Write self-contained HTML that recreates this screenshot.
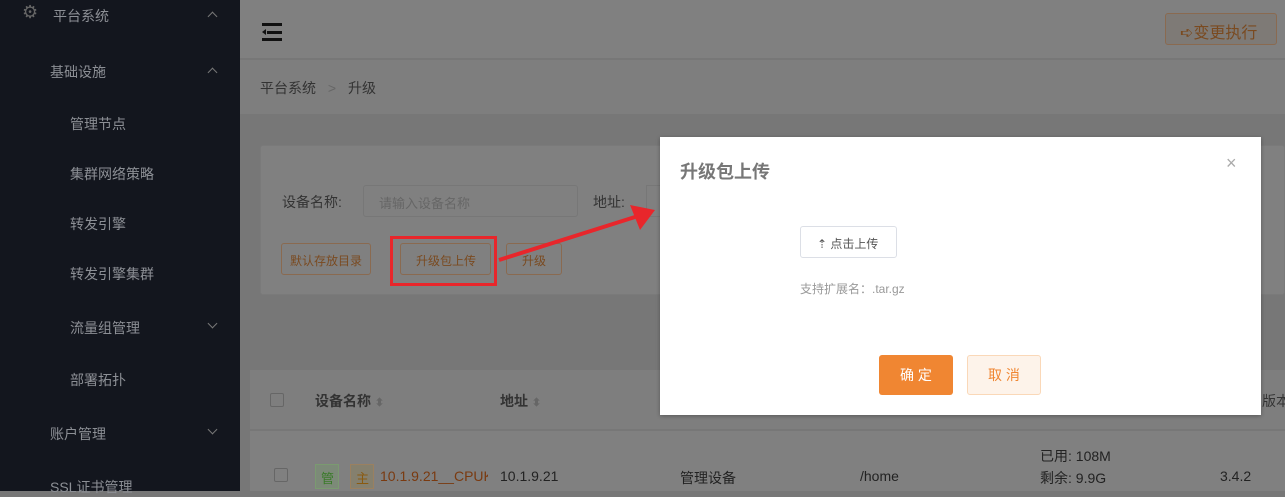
<!DOCTYPE html>
<html><head><meta charset="utf-8"><style>
*{margin:0;padding:0;box-sizing:border-box}
body{width:1285px;height:491px;overflow:hidden;position:relative;font-family:"Liberation Sans","Noto Sans CJK SC",sans-serif;background:#777}
.sb{position:absolute;left:0;top:0;width:240px;height:491px;background:#13161e;color:#8c8f95;font-size:14px}
.sb div{position:absolute;white-space:nowrap}
.car{position:absolute;width:7px;height:7px;border-left:1px solid #777;border-top:1px solid #777}
.up{transform:rotate(45deg)}.dn{transform:rotate(225deg)}
.a{position:absolute;white-space:nowrap}
</style></head><body>
<div class="sb">
<div style="left:22px;top:2px;font-size:18px;color:#666">⚙</div>
<div style="left:53px;top:6px">平台系统</div><div class="car up" style="left:209px;top:13px"></div>
<div style="left:50px;top:62px">基础设施</div><div class="car up" style="left:209px;top:69px"></div>
<div style="left:70px;top:114px">管理节点</div>
<div style="left:70px;top:164px">集群网络策略</div>
<div style="left:70px;top:214px">转发引擎</div>
<div style="left:70px;top:264px">转发引擎集群</div>
<div style="left:70px;top:318px">流量组管理</div><div class="car dn" style="left:209px;top:320px"></div>
<div style="left:70px;top:370px">部署拓扑</div>
<div style="left:50px;top:424px">账户管理</div><div class="car dn" style="left:209px;top:426px"></div>
<div style="left:50px;top:477px">SSL证书管理</div>
</div>
<div class="a" style="left:240px;top:0;width:1045px;height:58px;background:#808080"></div>
<div class="a" style="left:262px;top:23px;width:20px;height:3px;background:#111"></div>
<div class="a" style="left:267px;top:31px;width:15px;height:3px;background:#111"></div>
<div class="a" style="left:262px;top:38px;width:20px;height:3px;background:#111"></div>
<div class="a" style="left:262px;top:29px;width:0;height:0;border-top:3px solid transparent;border-bottom:3px solid transparent;border-right:4px solid #111"></div>
<div class="a" style="left:1165px;top:13px;width:112px;height:32px;border:1px solid #8a6a50;border-radius:3px;background:#7e7a76;color:#7a4a20;font-size:16px;padding:5px 0 0 14px">➪变更执行</div>
<div class="a" style="left:240px;top:60px;width:1045px;height:54px;background:#7e7e7e;color:#333;font-size:14px;padding:18px 0 0 20px">平台系统 <span style="color:#666;margin:0 8px">&gt;</span> 升级</div>
<div class="a" style="left:260px;top:145px;width:1025px;height:150px;background:#808080;border:1px solid #7a7a7a;border-radius:3px"></div>
<div class="a" style="left:282px;top:192px;font-size:14px;color:#333">设备名称:</div>
<div class="a" style="left:363px;top:185px;width:215px;height:32px;border:1px solid #777;border-radius:3px;color:#666;font-size:13px;padding:7px 0 0 15px">请输入设备名称</div>
<div class="a" style="left:593px;top:192px;font-size:14px;color:#333">地址:</div>
<div class="a" style="left:646px;top:185px;width:20px;height:32px;border:1px solid #777"></div>
<div class="a" style="left:281px;top:243px;width:90px;height:32px;border:1px solid #8a6a50;border-radius:3px;color:#7a4a20;font-size:12px;padding:8px 0 0 8px">默认存放目录</div>
<div class="a" style="left:400px;top:243px;width:91px;height:32px;border:1px solid #8a6a50;border-radius:3px;color:#7a4a20;font-size:12px;padding:8px 0 0 15px">升级包上传</div>
<div class="a" style="left:390px;top:236px;width:107px;height:50px;border:3px solid #e8262b"></div>
<div class="a" style="left:506px;top:243px;width:56px;height:32px;border:1px solid #8a6a50;border-radius:3px;color:#7a4a20;font-size:12px;padding:8px 0 0 15px">升级</div>
<svg class="a" style="left:495px;top:205px" width="165" height="60"><line x1="4" y1="55" x2="140" y2="12" stroke="#e8262b" stroke-width="4"/><polygon points="160,5 135,0 145,25" fill="#e8262b"/></svg>
<div class="a" style="left:250px;top:370px;width:1035px;height:60px;background:#7e7e7e;border-bottom:1px solid #777"></div>
<div class="a" style="left:270px;top:393px;width:14px;height:14px;border:1px solid #666;border-radius:2px"></div>
<div class="a" style="left:315px;top:391px;font-size:14px;color:#333;font-weight:bold">设备名称 <span style="color:#666;font-size:11px">⬍</span></div>
<div class="a" style="left:500px;top:391px;font-size:14px;color:#333;font-weight:bold">地址 <span style="color:#666;font-size:11px">⬍</span></div>
<div class="a" style="left:1262px;top:391px;font-size:14px;color:#333">版本</div>
<div class="a" style="left:250px;top:431px;width:1035px;height:60px;background:#808080"></div>
<div class="a" style="left:274px;top:468px;width:14px;height:14px;border:1px solid #666;border-radius:2px"></div>
<div class="a" style="left:315px;top:464px;width:24px;height:25px;border:1px solid #7a9a70;background:#7c8a78;color:#3a7a2a;font-size:13px;padding:3px 0 0 5px">管</div>
<div class="a" style="left:350px;top:464px;width:24px;height:25px;border:1px solid #9a8060;background:#85806e;color:#8a5a10;font-size:13px;padding:3px 0 0 5px">主</div>
<div class="a" style="left:380px;top:468px;width:108px;overflow:hidden;font-size:14px;color:#7a3a10">10.1.9.21__CPUK</div>
<div class="a" style="left:500px;top:468px;font-size:14px;color:#222">10.1.9.21</div>
<div class="a" style="left:680px;top:468px;font-size:14px;color:#222">管理设备</div>
<div class="a" style="left:860px;top:468px;font-size:14px;color:#222">/home</div>
<div class="a" style="left:1040px;top:446px;font-size:14px;color:#222">已用: 108M</div>
<div class="a" style="left:1040px;top:468px;font-size:14px;color:#222">剩余: 9.9G</div>
<div class="a" style="left:1220px;top:468px;font-size:14px;color:#222">3.4.2</div>
<div class="a" style="left:660px;top:137px;width:601px;height:278px;background:#fff;box-shadow:0 1px 4px rgba(0,0,0,.3)">
<div class="a" style="left:20px;top:21px;font-size:18px;font-weight:bold;color:#777">升级包上传</div>
<div class="a" style="left:566px;top:16px;font-size:18px;color:#aaa">×</div>
<div class="a" style="left:140px;top:89px;width:97px;height:32px;border:1px solid #dcdfe6;border-radius:3px;font-size:12px;color:#555;padding:8px 0 0 16px">⇡ 点击上传</div>
<div class="a" style="left:140px;top:143px;font-size:12px;color:#999">支持扩展名：.tar.gz</div>
<div class="a" style="left:219px;top:218px;width:74px;height:40px;background:#f08632;border-radius:3px;color:#fff;font-size:14px;text-align:center;line-height:40px">确 定</div>
<div class="a" style="left:307px;top:218px;width:74px;height:40px;background:#fdf3ea;border:1px solid #fad8b8;border-radius:3px;color:#f08632;font-size:14px;text-align:center;line-height:38px">取 消</div>
</div>
</body></html>
